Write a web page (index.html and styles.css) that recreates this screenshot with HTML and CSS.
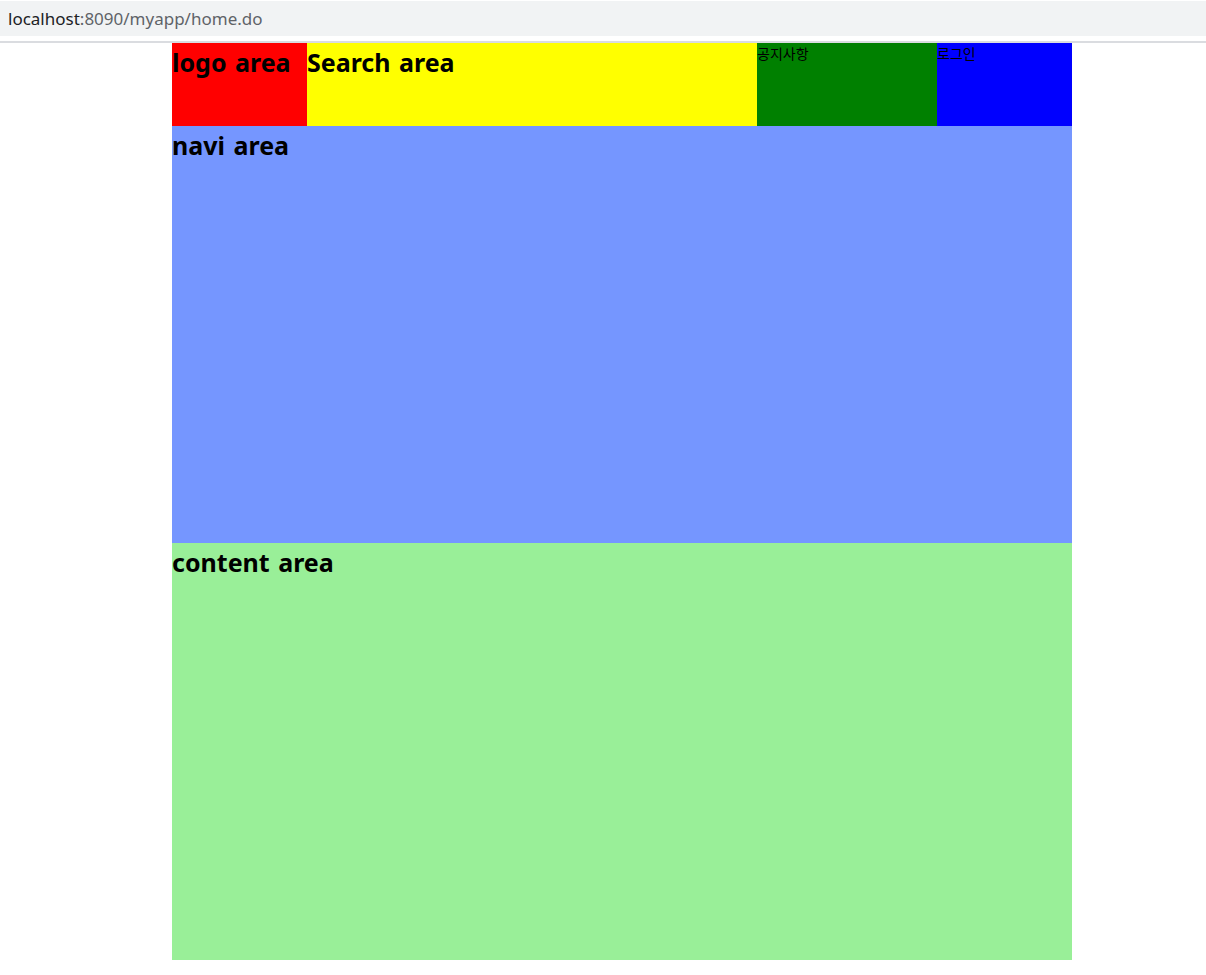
FILE: index.html
```html
<!DOCTYPE html>
<html>
<head>
	<meta charset="utf-8">
	<title>home</title>
	<link rel="stylesheet" href="styles.css">
</head>
<body>
	<div class="urlbar"><span class="host">localhost</span>:8090/myapp/home.do</div>
	<div class="urlline"></div>
	<div class="wrap">
		<div class="header">
			<div class="logo"><h2>logo area</h2></div>
			<div class="search"><h2>Search area</h2></div>
			<div class="notice">공지사항</div>
			<div class="login">로그인</div>
		</div>
		<div class="navi"><h2>navi area</h2></div>
		<div class="content"><h2>content area</h2></div>
	</div>
</body>
</html>
```

FILE: styles.css
```css
body{
	margin:0px;
	font-family:"Noto Sans","Noto Sans CJK KR",sans-serif;
}
.urlbar{
	height:35px;
	margin-top:1px;
	background-color:#f1f3f4;
	color:#5f6368;
	font-size:17px;
	line-height:36px;
	padding-left:8px;
}
.host{
	color:#202124;
}
.urlline{
	height:2px;
	margin-top:5px;
	background-color:#dadce0;
}
.wrap{
	width:900px;
	margin-left:172px;
}
h2{
	margin:0px;
	font-size:25px;
	line-height:38px;
	font-weight:bold;
	word-spacing:2px;
}
.header{
	display:flex;
	height:83px;
}
.logo{
	width:135px;
	background-color:red;
}
.search{
	width:450px;
	background-color:yellow;
}
.notice,.login{
	font-family:"Noto Sans CJK KR",sans-serif;
	font-size:14px;
	line-height:20px;
}
.notice{
	width:180px;
	background-color:green;
}
.login{
	width:135px;
	background-color:blue;
}
.navi{
	height:417px;
	background-color:#7596ff;
}
.content{
	height:417px;
	background-color:#99ef98;
}
```
